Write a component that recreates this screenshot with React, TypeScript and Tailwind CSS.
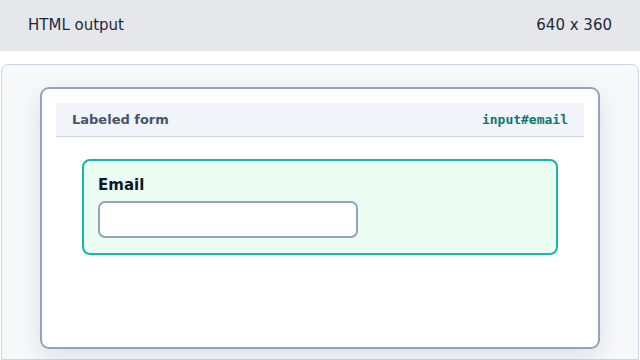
export default function App() {
  return (
    <div className="w-[640px] h-[360px] overflow-hidden bg-white flex flex-col" style={{ fontFamily: '"DejaVu Sans", sans-serif' }}>
      <div className="h-[51px] shrink-0 bg-[#e5e7eb] flex items-center justify-between px-[28px] text-[15px] text-[#1f2937]">
        <span>HTML output</span>
        <span>640 x 360</span>
      </div>
      <div className="mt-[13px] mx-[1px] flex-1 rounded-t-[7px] border border-[#cbd5e1] bg-[#f6f8fa] pt-[22px] px-[38px]">
        <div className="h-[262px] rounded-[9px] border-2 border-[#94a3b8] bg-white shadow-[0_8px_24px_rgba(15,23,42,0.10)] p-[14px]">
          <div className="h-[34px] bg-[#f1f5f9] border-b border-[#cbd5e1] flex items-center justify-between pl-[16px] pr-[16px]">
            <span className="text-[13px] font-bold text-[#475569]">Labeled form</span>
            <span className="text-[13px] font-bold text-[#0f766e]" style={{ fontFamily: '"DejaVu Sans Mono", monospace' }}>input#email</span>
          </div>
          <div className="mt-[22px] mx-[26px] h-[96px] rounded-[8px] border-2 border-[#14b8a6] bg-[#ebfcf3] px-[14px] pt-[14px]">
            <div className="text-[15px] font-bold text-[#0f172a] leading-[20px]">Email</div>
            <div className="mt-[6px] w-[260px] h-[37px] rounded-[7px] border-2 border-[#94a3b8] bg-white" />
          </div>
        </div>
      </div>
    </div>
  );
}
